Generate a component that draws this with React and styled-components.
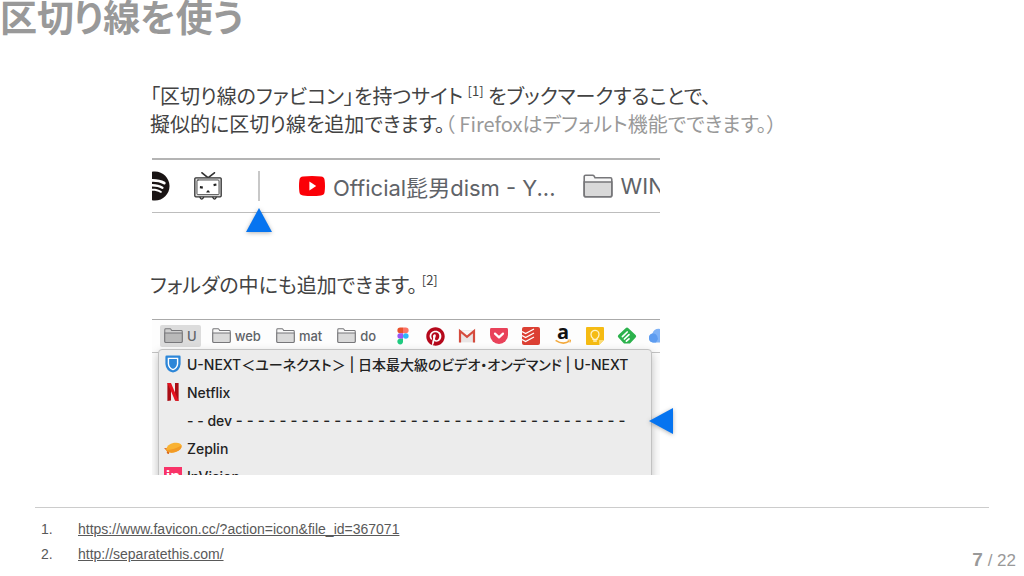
import React from "react";
import styled, { createGlobalStyle } from "styled-components";
import { FaPinterest, FaSpotify } from "react-icons/fa";

const App = () => {
  return (
    <Slide>
      <GlobalStyle />
      <Title>区切り線を使う</Title>

      <Content>
        <Section>
          <Lead>
            「区切り線のファビコン」を持つサイト <Ref>[1]</Ref> をブックマークすることで、
            <br />
            擬似的に区切り線を追加できます。<Muted>（ Firefoxはデフォルト機能でできます。）</Muted>
          </Lead>
          <Shot>
            <LargeBar>
              <SpotifyIcon />
              <TvIcon />
              <Separator />
              <LargeBookmark>
                <YoutubeIcon />
                Official髭男dism - Y...
              </LargeBookmark>
              <LargeBookmark>
                <FolderIcon size={30} />
                WIN
              </LargeBookmark>
            </LargeBar>
            <PointerUp viewBox="0 0 26 24">
              <path d="M13 0L26 24H0z" fill="#0674f0" />
            </PointerUp>
          </Shot>
        </Section>

        <Section>
          <Lead>
            フォルダの中にも追加できます。 <Ref>[2]</Ref>
          </Lead>
          <Shot>
            <Browser>
              <SmallBar>
                <Folder $active>
                  <FolderIcon size={19} dark />U
                </Folder>
                <Folder>
                  <FolderIcon size={19} />
                  web
                </Folder>
                <Folder>
                  <FolderIcon size={19} />
                  mat
                </Folder>
                <Folder>
                  <FolderIcon size={19} />
                  do
                </Folder>
                <Favicons>
                  <FigmaIcon />
                  <FaPinterest size={19} color="#b5081b" />
                  <GmailIcon />
                  <PocketIcon />
                  <TodoistIcon />
                  <AmazonIcon />
                  <KeepIcon />
                  <FeedlyIcon />
                  <CloudIcon />
                </Favicons>
              </SmallBar>
              <Menu>
                <MenuItem>
                  <UnextIcon />
                  <span>U-NEXT＜ユーネクスト＞ | 日本最大級のビデオ・オンデマンド | U-NEXT</span>
                </MenuItem>
                <MenuItem>
                  <NetflixIcon />
                  Netflix
                </MenuItem>
                <MenuItem>
                  <Blank />
                  <span>
                    - - dev <Dashes>- - - - - - - - - - - - - - - - - - - - - - - - - - - - - - - - - - - -</Dashes>
                  </span>
                </MenuItem>
                <MenuItem>
                  <ZeplinIcon />
                  Zeplin
                </MenuItem>
                <MenuItem>
                  <InvisionIcon />
                  InVision
                </MenuItem>
              </Menu>
            </Browser>
            <PointerLeft viewBox="0 0 24 26">
              <path d="M0 13L24 0V26z" fill="#0674f0" />
            </PointerLeft>
          </Shot>
        </Section>
      </Content>

      <Footer>
        <Rule />
        <FooterRow>
          <References>
            <Reference>
              <span>1.</span>
              <Link href="https://www.favicon.cc/?action=icon&file_id=367071">
                https://www.favicon.cc/?action=icon&amp;file_id=367071
              </Link>
            </Reference>
            <Reference>
              <span>2.</span>
              <Link href="http://separatethis.com/">http://separatethis.com/</Link>
            </Reference>
          </References>
          <PageNumber>
            <b>7</b> / 22
          </PageNumber>
        </FooterRow>
      </Footer>
    </Slide>
  );
};

export default App;


const FolderIcon = ({ size, dark }) => (
  <svg width={size} height={size * 0.8} viewBox="0 0 30 24">
    <path
      d="M1.2 21V2.6Q1.2 1.2 2.6 1.2H9.6Q10.6 1.2 11.2 2.2L12 3.8H27.4Q28.8 3.8 28.8 5.2V21Q28.8 22.8 27 22.8H3Q1.2 22.8 1.2 21z"
      fill={dark ? "#cfcfcf" : "#f7f7f7"}
      stroke="#77777a"
      strokeWidth="1.6"
    />
    <path
      d="M1.2 8H28.8V21Q28.8 22.8 27 22.8H3Q1.2 22.8 1.2 21z"
      fill={dark ? "#b9b9b9" : "#d9d9d9"}
      stroke="#77777a"
      strokeWidth="1.6"
    />
  </svg>
);

const TvIcon = () => (
  <svg width="28" height="28" viewBox="0 0 28 28">
    <g fill="none" stroke="#333" strokeWidth="1.3" strokeLinecap="round">
      <path d="M8 .8L13.6 5.4M20.4 .8L14.6 5.4" strokeWidth="1.7" />
      <rect x=".8" y="5.8" width="26.4" height="19" rx="1" fill="#ddd" />
      <rect x="3" y="8" width="22" height="14.6" rx="1" fill="#fff" strokeWidth=".8" />
      <path d="M6 25.4Q7.6 28.8 9.6 25.4M18.8 25.4Q20.6 28.8 22.2 25.4" />
    </g>
    <path d="M6 14l3 .6-.4 2.2-2.8-.6zM19.4 12l2.8-.6.4 2.2-2.8.6zM12.2 20.4Q14 16 16 20.4z" fill="#222" />
  </svg>
);

const YoutubeIcon = () => (
  <svg width="26" height="20" viewBox="0 0 26 20">
    <path
      d="M4 .6Q13-.4 22 .6Q25.2 .8 25.6 4Q26.4 10 25.6 16Q25.2 19.2 22 19.4Q13 20.4 4 19.4Q.8 19.2 .4 16Q-.4 10 .4 4Q.8 .8 4 .6z"
      fill="#fb0007"
    />
    <path d="M10.4 5.6L17.2 10L10.4 14.4z" fill="#fff" />
  </svg>
);

const FigmaIcon = () => (
  <svg width="18" height="18" viewBox="0 0 18 18">
    <path d="M9 .6H6.2a2.8 2.8 0 000 5.6H9z" fill="#e9502b" />
    <path d="M9 .6h2.8a2.8 2.8 0 010 5.6H9z" fill="#fb7364" />
    <path d="M9 6.2H6.2a2.8 2.8 0 000 5.6H9z" fill="#9a55f4" />
    <circle cx="11.8" cy="9" r="2.8" fill="#2cb8f8" />
    <path d="M9 11.8H6.2A2.8 2.8 0 109 14.6z" fill="#1fcb80" />
  </svg>
);

const GmailIcon = () => (
  <svg width="18" height="18" viewBox="0 0 18 18">
    <path d="M1 3h16v12.4H1z" fill="#e9e5e5" />
    <path d="M1.4 3.4L9 9.4L16.6 3.4" fill="#f7f5f5" />
    <path d="M2 15.4V4L9 9.8L16 4V15.4" fill="none" stroke="#d54b3d" strokeWidth="2.2" />
  </svg>
);

const PocketIcon = () => (
  <svg width="20" height="18" viewBox="0 0 20 18">
    <path d="M2.4 1h15.2Q19 1 19 2.4V8A9 9 0 011 8V2.4Q1 1 2.4 1z" fill="#e9425a" />
    <path d="M6 6.6L10 10.4L14 6.6" fill="none" stroke="#fff" strokeWidth="2.2" strokeLinecap="round" strokeLinejoin="round" />
  </svg>
);

const TodoistIcon = () => (
  <svg width="18" height="18" viewBox="0 0 18 18">
    <rect width="18" height="18" rx="2" fill="#dc4033" />
    <path d="M0 4.6l3.6 2L12 2M0 8.6l3.6 2L12 6M0 12.6l3.6 2L12 10" fill="none" stroke="#fff" strokeWidth="1.3" />
  </svg>
);

const AmazonIcon = () => (
  <svg width="18" height="18" viewBox="0 0 18 18">
    <text x="9" y="12.4" textAnchor="middle" fontFamily="Open Sans, sans-serif" fontWeight="700" fontSize="20" fill="#111">
      a
    </text>
    <path d="M1.6 13.4Q9 18.4 15.4 14.2" fill="none" stroke="#f3a93c" strokeWidth="1.5" />
    <path d="M13.6 13.2l3-.2-.6 2.6" fill="none" stroke="#f3a93c" />
  </svg>
);

const KeepIcon = () => (
  <svg width="18" height="18" viewBox="0 0 18 18">
    <path d="M1 0H17Q18 0 18 1V13L13 18H1Q0 18 0 17V1Q0 0 1 0z" fill="#f5bb13" />
    <path d="M18 13h-5v5z" fill="#fbdc75" />
    <path d="M7 11.4Q5 9.8 5 7.4A4 4 0 0113 7.4Q13 9.8 11 11.4V12.4H7zM7.2 14h3.6" fill="none" stroke="#fff3c4" strokeWidth="1.3" />
  </svg>
);

const FeedlyIcon = () => (
  <svg width="20" height="18" viewBox="0 0 20 18">
    <path d="M8.6 1.2Q10 0 11.4 1.2L18.6 8Q19.8 9.2 18.6 10.4L13 16.4H7L1.4 10.4Q.2 9.2 1.4 8z" fill="#2bb24c" />
    <path d="M5.4 9.6L10.2 5M7.4 12L12 7.6M9.4 14.2L12 11.8" stroke="#fff" strokeWidth="1.7" strokeLinecap="round" />
  </svg>
);

const CloudIcon = () => (
  <svg width="22" height="18" viewBox="0 0 22 18">
    <path d="M5 15.6A4.6 4.6 0 014.4 6.6A6.6 6.6 0 0117 6.4A4.8 4.8 0 0117 15.6z" fill="#7fb2f6" />
    <path d="M5 15.6A4.6 4.6 0 014.4 6.6Q9 6 10 12L8 15.6z" fill="#5d9cf0" />
  </svg>
);

const UnextIcon = () => (
  <svg width="16" height="18" viewBox="0 0 16 18">
    <path d="M1.6 .6H14.4Q15.6 .6 15.6 2V9Q15 16 8 17.6Q1 16 .4 9V2Q.4 .6 1.6 .6z" fill="#2c86d8" />
    <path d="M3.4 3.4H12.6V8.8Q12.2 13.2 8 14.6Q3.8 13.2 3.4 8.8z" fill="#2c86d8" stroke="#fff" strokeWidth="1.4" />
  </svg>
);

const NetflixIcon = () => (
  <svg width="16" height="18" viewBox="0 0 16 18">
    <path d="M2.4 0H6V17.6L2.4 18zM10 0h3.6V18L10 17.6z" fill="#a90d15" />
    <path d="M2.4 0H6L13.6 18L10 17.6z" fill="#e51320" />
  </svg>
);

const ZeplinIcon = () => (
  <svg width="18" height="16" viewBox="0 0 18 16">
    <path d="M0 8L5.6 8.6L5 14Q2 14 3 11z" fill="#d9661c" />
    <path d="M2 10Q3 4 10 2.8Q16.4 2 17.6 5.4Q18 9.6 11.6 12Q4.6 14 2 10z" fill="#f9b233" />
    <path d="M2 10Q9 10 17.6 5.4Q18 9.6 11.6 12Q4.6 14 2 10z" fill="#f29a25" />
  </svg>
);

const InvisionIcon = () => (
  <svg width="18" height="18" viewBox="0 0 18 18">
    <rect width="18" height="18" fill="#f83368" />
    <text x="9" y="14" textAnchor="middle" fontFamily="Open Sans, sans-serif" fontWeight="700" fontSize="15" fill="#fff">
      in
    </text>
  </svg>
);


const GlobalStyle = createGlobalStyle`
  body {
    margin: 0;
    background: #fff;
  }
`;

const Slide = styled.main`
  display: flex;
  flex-direction: column;
  min-height: 100vh;
  overflow: hidden;
  color: #434343;
  font-family: "Noto Sans CJK JP", sans-serif;
`;

const Title = styled.h1`
  margin: 0;
  height: 82px;
  font-size: 37px;
  line-height: 32px;
  font-weight: 700;
  font-feature-settings: "palt";
  color: #999;
`;

const Content = styled.div`
  display: flex;
  flex-direction: column;
  gap: 58px;
  padding: 0 150px;
`;

const Section = styled.section`
  display: flex;
  flex-direction: column;
  gap: 20px;
`;

const Lead = styled.p`
  margin: 0;
  font-size: 20px;
  line-height: 28px;
  font-feature-settings: "palt";
  white-space: nowrap;
`;

const Ref = styled.sup`
  font-size: 13px;
  line-height: 0;
`;

const Muted = styled.span`
  color: #999;
`;

const Shot = styled.div`
  position: relative;
  max-width: 508px;
  margin-left: 2px;
`;

const LargeBar = styled.div`
  display: flex;
  align-items: center;
  height: 52px;
  border-top: 2px solid #b4b4b4;
  border-bottom: 1px solid #bdbdbd;
  overflow: hidden;

  svg {
    flex: none;
  }
`;

const SpotifyIcon = styled(FaSpotify).attrs({ size: 30 })`
  margin: 0 24px 0 -12px;
  color: #191414;
`;

const Separator = styled.div`
  flex: none;
  width: 2px;
  height: 30px;
  margin: 0 39px 0 36px;
  background: #c8c8c8;
`;

const LargeBookmark = styled.div`
  display: flex;
  flex: none;
  align-items: center;
  gap: 8px;
  margin-right: 27px;
  font-family: Inter, "Noto Sans CJK JP", sans-serif;
  font-size: 22px;
  color: #5f6368;
`;

const PointerUp = styled.svg`
  position: absolute;
  top: 50px;
  left: 94px;
  width: 26px;
  height: 24px;
  overflow: visible;
  filter: drop-shadow(0 1px 2px rgba(0, 0, 0, 0.3));
`;

const PointerLeft = styled.svg`
  position: absolute;
  top: 89px;
  left: 497px;
  width: 24px;
  height: 26px;
  overflow: visible;
  filter: drop-shadow(0 1px 2px rgba(0, 0, 0, 0.3));
`;

const Browser = styled.div`
  position: relative;
  height: 156px;
  overflow: hidden;
  background: #fdfdfd;
`;

const SmallBar = styled.div`
  display: flex;
  align-items: center;
  height: 32px;
  padding-left: 8px;
  border-top: 1px solid #aaa;
  border-bottom: 1px solid #c4c4c4;
  overflow: hidden;
`;

const Folder = styled.div`
  display: flex;
  flex: none;
  align-items: center;
  gap: 4px;
  height: 22px;
  margin-right: 7px;
  padding: 0 4px;
  border-radius: 2px;
  background: ${(props) => (props.$active ? "#dcdcdc" : "transparent")};
  font-family: Inter, "Noto Sans CJK JP", sans-serif;
  font-size: 13px;
  font-weight: 500;
  color: #5f6368;
`;

const Favicons = styled.div`
  display: grid;
  flex: none;
  grid-template-columns: repeat(9, 32px);
  align-items: center;
  justify-items: center;
`;

const Menu = styled.ul`
  position: absolute;
  top: 30px;
  left: 6px;
  right: 8px;
  margin: 0;
  padding: 0;
  border: 1px solid #c2c2c2;
  border-radius: 4px;
  background: #ececec;
  box-shadow: 0 4px 10px rgba(0, 0, 0, 0.25);
  list-style: none;
`;

const MenuItem = styled.li`
  display: flex;
  align-items: center;
  gap: 5px;
  height: 28px;
  padding-left: 5px;
  font-family: Inter, "Noto Sans CJK JP", sans-serif;
  font-size: 14px;
  font-weight: 500;
  font-feature-settings: "palt";
  color: #222;
  white-space: nowrap;

  svg {
    flex: none;
    width: 18px;
  }
`;

const Blank = styled.span`
  width: 18px;
`;

const Dashes = styled.span`
  font-size: 15px;
`;

const Footer = styled.footer`
  margin-top: auto;
  font-family: "Liberation Sans", sans-serif;
`;

const Rule = styled.hr`
  margin: 0 35px;
  border: 0;
  border-top: 1px solid #ccc;
`;

const FooterRow = styled.div`
  display: flex;
  justify-content: space-between;
  padding: 9px 8px 0 41px;
`;

const References = styled.ol`
  margin: 0;
  padding: 0 0 9px;
  list-style: none;
`;

const Reference = styled.li`
  display: grid;
  grid-template-columns: 37px auto;
  font-size: 14px;
  line-height: 25px;
  color: #595959;
`;

const Link = styled.a`
  color: #595959;
  text-decoration: underline;
`;

const PageNumber = styled.div`
  align-self: flex-end;
  font-size: 17px;
  line-height: 30px;
  color: #999;

  b {
    font-size: 19px;
  }
`;
